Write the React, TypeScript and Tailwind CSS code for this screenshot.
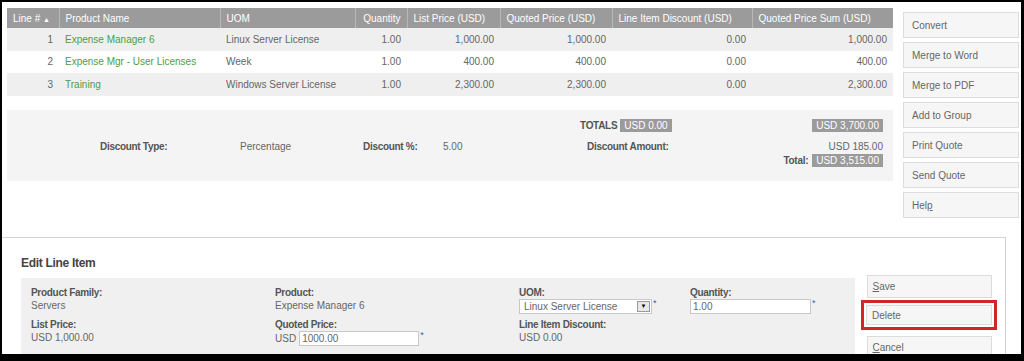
import React from "react";

const rows = [
  { n: 1, name: "Expense Manager 6", uom: "Linux Server License", qty: "1.00", list: "1,000.00", quoted: "1,000.00", disc: "0.00", sum: "1,000.00" },
  { n: 2, name: "Expense Mgr - User Licenses", uom: "Week", qty: "1.00", list: "400.00", quoted: "400.00", disc: "0.00", sum: "400.00" },
  { n: 3, name: "Training", uom: "Windows Server License", qty: "1.00", list: "2,300.00", quoted: "2,300.00", disc: "0.00", sum: "2,300.00" },
];

const sideActions = ["Convert", "Merge to Word", "Merge to PDF", "Add to Group", "Print Quote", "Send Quote", "Help"];

function Th({ children, className = "" }: { children: React.ReactNode; className?: string }) {
  return (
    <th className={`h-[20px] overflow-hidden whitespace-nowrap border-l border-[#b8b8b8] px-[6px] text-left font-normal text-white first:border-l-0 ${className}`}>
      {children}
    </th>
  );
}

function Badge({ children }: { children: React.ReactNode }) {
  return <span className="inline-block bg-[#9b9b9b] px-[4px] leading-[13px] text-white">{children}</span>;
}

function Label({ children }: { children: React.ReactNode }) {
  return <span className="font-bold tracking-[-0.3px] text-[#555]">{children}</span>;
}

function SideButton({ label }: { label: string }) {
  const content =
    label === "Help" ? (
      <>
        Hel<span className="underline">p</span>
      </>
    ) : (
      label
    );
  return (
    <div className="flex h-[26px] items-center border border-[#dcdcdc] bg-[#f6f6f6] px-[8px] text-[#666]">{content}</div>
  );
}

const Req = () => <span className="ml-[1px] text-[9px] leading-[9px] text-[#2b5fb4]">*</span>;

export default function App() {
  return (
    <div
      className="h-[361px] w-[1024px] overflow-hidden bg-black pt-[2px] pl-[2px] pr-[3px] pb-[7px] text-[10px] text-[#666]"
      style={{ fontFamily: "'Liberation Sans', Arial, sans-serif" }}
    >
      <div className="relative h-full w-full overflow-hidden bg-white">
        {/* line items table and action buttons */}
        <div className="flex gap-[10px] pt-[6px] pl-[5px]">
          <div className="w-[886px]">
            <table className="w-full table-fixed border-collapse">
              <colgroup>
                <col className="w-[52px]" />
                <col className="w-[161px]" />
                <col className="w-[135px]" />
                <col className="w-[52px]" />
                <col className="w-[93px]" />
                <col className="w-[112px]" />
                <col className="w-[140px]" />
                <col />
              </colgroup>
              <thead>
                <tr className="bg-[#9b9b9b]">
                  <Th>Line # <span className="text-[7px]">▲</span></Th>
                  <Th>Product Name</Th>
                  <Th>UOM</Th>
                  <Th className="text-right">Quantity</Th>
                  <Th>List Price (USD)</Th>
                  <Th>Quoted Price (USD)</Th>
                  <Th>Line Item Discount (USD)</Th>
                  <Th>Quoted Price Sum (USD)</Th>
                </tr>
              </thead>
              <tbody>
                {rows.map((r, i) => (
                  <tr key={r.n} className={`h-[22.5px] ${i % 2 === 0 ? "bg-[#efefef]" : "bg-white"}`}>
                    <td className="px-[6px] text-right">{r.n}</td>
                    <td className="whitespace-nowrap px-[6px] text-[#4c9e45]">{r.name}</td>
                    <td className="whitespace-nowrap px-[6px]">{r.uom}</td>
                    <td className="px-[6px] text-right">{r.qty}</td>
                    <td className="px-[6px] text-right">{r.list}</td>
                    <td className="px-[6px] text-right">{r.quoted}</td>
                    <td className="px-[6px] text-right">{r.disc}</td>
                    <td className="px-[6px] text-right">{r.sum}</td>
                  </tr>
                ))}
              </tbody>
            </table>

            {/* totals */}
            <div className="mt-[14px] h-[71px] bg-[#f4f4f4] pt-[9px]">
              <div className="flex h-[14px] items-center">
                <span className="ml-[573px]">
                  <Label>TOTALS</Label>
                </span>
                <span className="ml-[3px]">
                  <Badge>USD 0.00</Badge>
                </span>
                <span className="ml-auto mr-[10px]">
                  <Badge>USD 3,700.00</Badge>
                </span>
              </div>
              <div className="mt-[7px] flex h-[14px] items-center">
                <span className="ml-[93px] w-[140px]">
                  <Label>Discount Type:</Label>
                </span>
                <span className="w-[123px]">Percentage</span>
                <span className="w-[80px]">
                  <Label>Discount %:</Label>
                </span>
                <span className="w-[144px]">5.00</span>
                <Label>Discount Amount:</Label>
                <span className="ml-auto mr-[10px]">USD 185.00</span>
              </div>
              <div className="flex h-[14px] items-center justify-end pr-[10px]">
                <span className="mr-[4px]">
                  <Label>Total:</Label>
                </span>
                <Badge>USD 3,515.00</Badge>
              </div>
            </div>
          </div>

          <div className="flex w-[116px] flex-col gap-[4px] pt-[4px]">
            {sideActions.map((a) => (
              <SideButton key={a} label={a} />
            ))}
          </div>
        </div>

        {/* edit line item panel */}
        <div className="mt-[19px] mr-[15px] h-[140px] border-t border-r border-[#d4d4d4]">
          <div className="pt-[17px] pl-[19px] text-[12px] leading-[16px] font-bold tracking-[-0.3px] text-[#444]">Edit Line Item</div>
          <div className="mt-[7px] flex pl-[19px]">
            <div className="h-[80px] w-[834px] bg-[#f0f0f0] pt-[8px] pl-[10px]">
              <div className="flex">
                <div className="w-[244px]">
                  <div className="leading-[13px]"><Label>Product Family:</Label></div>
                  <div className="leading-[13px]">Servers</div>
                </div>
                <div className="w-[244px]">
                  <div className="leading-[13px]"><Label>Product:</Label></div>
                  <div className="leading-[13px]">Expense Manager 6</div>
                </div>
                <div className="w-[171px]">
                  <div className="leading-[13px]"><Label>UOM:</Label></div>
                  <div className="flex items-start">
                    <div className="flex h-[15px] w-[133px] items-center justify-between border border-[#c8c8c8] bg-white pl-[4px]">
                      <span>Linux Server License</span>
                      <span className="mr-[1px] flex h-[11px] w-[13px] items-center justify-center border border-[#999] bg-[#e8e8e8] text-[6px] text-black">
                        ▼
                      </span>
                    </div>
                    <Req />
                  </div>
                </div>
                <div>
                  <div className="leading-[13px]"><Label>Quantity:</Label></div>
                  <div className="flex items-start">
                    <div className="flex h-[15px] w-[121px] items-center border border-[#c8c8c8] bg-white pl-[2px]">1.00</div>
                    <Req />
                  </div>
                </div>
              </div>
              <div className="mt-[4px] flex">
                <div className="w-[244px]">
                  <div className="leading-[13px]"><Label>List Price:</Label></div>
                  <div className="leading-[13px]">USD 1,000.00</div>
                </div>
                <div className="w-[244px]">
                  <div className="leading-[13px]"><Label>Quoted Price:</Label></div>
                  <div className="flex items-start">
                    <span className="mr-[3px] leading-[15px]">USD</span>
                    <div className="flex h-[15px] w-[120px] items-center border border-[#c8c8c8] bg-white pl-[2px]">1000.00</div>
                    <Req />
                  </div>
                </div>
                <div>
                  <div className="leading-[13px]"><Label>Line Item Discount:</Label></div>
                  <div className="leading-[13px]">USD 0.00</div>
                </div>
              </div>
            </div>

            <div className="ml-[6px] flex w-[136px] flex-col items-center">
              <div className="-mt-[3px] flex h-[23px] w-[125px] items-center border border-[#dcdcdc] bg-[#f6f6f6] px-[5px] text-[#666]">
                <span className="underline">S</span>ave
              </div>
              <div className="mt-[2px] w-[136px] border-[3px] border-[#d0242f] p-[2px]">
                <div className="flex h-[20px] items-center border border-[#dcdcdc] bg-[#f6f6f6] px-[5px] text-[#666]">Delete</div>
              </div>
              <div className="mt-[6px] flex h-[23px] w-[125px] items-center border border-[#dcdcdc] bg-[#f6f6f6] px-[5px] text-[#666]">
                <span className="underline">C</span>ancel
              </div>
            </div>
          </div>
        </div>
      </div>
    </div>
  );
}
